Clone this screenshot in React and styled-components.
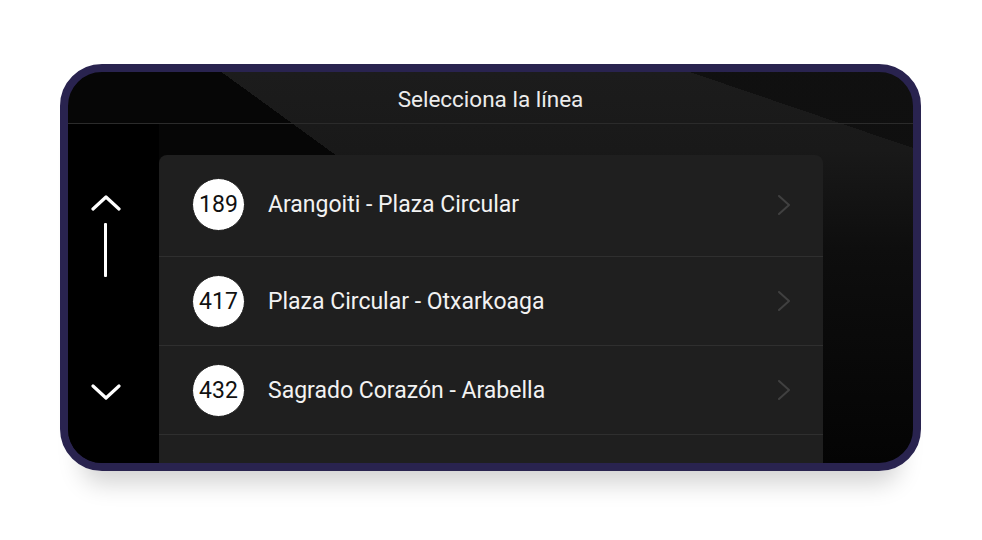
import React from "react";
import styled, { createGlobalStyle } from "styled-components";

const lines = [
  { id: "189", name: "Arangoiti - Plaza Circular" },
  { id: "417", name: "Plaza Circular - Otxarkoaga" },
  { id: "432", name: "Sagrado Corazón - Arabella" },
];

const ChevronUp = () => (
  <svg width="30" height="16" viewBox="0 0 30 16" fill="none">
    <path d="M2 14 L15 2 L28 14" stroke="#fff" strokeWidth="3.2" strokeLinecap="round" strokeLinejoin="round" />
  </svg>
);

const ChevronDown = () => (
  <svg width="30" height="18" viewBox="0 0 30 18" fill="none">
    <path d="M2 3 L15 15 L28 3" stroke="#fff" strokeWidth="3.2" strokeLinecap="round" strokeLinejoin="round" />
  </svg>
);

const ChevronRight = () => (
  <svg width="14" height="20" viewBox="0 0 14 20" fill="none">
    <path d="M2 1 L12 10 L2 19" stroke="#404040" strokeWidth="2" strokeLinecap="round" strokeLinejoin="round" />
  </svg>
);

const App = () => {
  return (
    <>
      <GlobalStyle />
      <Stage>
        <Frame>
          <Header>Selecciona la línea</Header>
          <Body>
            <Sidebar>
              <ChevronUp />
              <ScrollBar />
              <DownButton>
                <ChevronDown />
              </DownButton>
            </Sidebar>
            <Panel>
              {lines.map((line, i) => (
                <Row key={line.id} $first={i === 0}>
                  <Badge>{line.id}</Badge>
                  <RowName>{line.name}</RowName>
                  <ChevronRight />
                </Row>
              ))}
            </Panel>
            <div />
          </Body>
        </Frame>
      </Stage>
    </>
  );
};

export default App;

const GlobalStyle = createGlobalStyle`
  body {
    margin: 0;
    background: #ffffff;
    font-family: Roboto, "Liberation Sans", sans-serif;
  }
`;

const Stage = styled.div`
  width: 982px;
  height: 540px;
  box-sizing: border-box;
  padding: 64px 61px 0 60px;
`;

const Frame = styled.div`
  height: 407px;
  box-sizing: border-box;
  border: 8px solid #29234f;
  border-radius: 42px;
  overflow: hidden;
  display: flex;
  flex-direction: column;
  box-shadow: 0 34px 24px -22px rgba(0, 0, 0, 0.18);
  background:
    linear-gradient(18.8deg, transparent 88.8%, rgba(14, 14, 14, 0.85) 88.8%),
    linear-gradient(36deg, #060606 50%, transparent 50%),
    linear-gradient(to bottom, #1c1c1c 0%, #191919 20%, #0e0e0e 45%, #040404 100%);
`;

const Header = styled.div`
  height: 52px;
  flex-shrink: 0;
  border-bottom: 1px solid #2b2b2b;
  display: flex;
  align-items: center;
  justify-content: center;
  color: #ececec;
  font-size: 22.5px;
  padding-top: 2px;
  box-sizing: border-box;
`;

const Body = styled.div`
  flex: 1;
  display: grid;
  grid-template-columns: 91px 1fr 90px;
  min-height: 0;
`;

const Sidebar = styled.div`
  background: #000;
  display: flex;
  flex-direction: column;
  align-items: center;
  padding: 71px 16px 62px 0;
`;

const ScrollBar = styled.div`
  width: 3px;
  height: 54px;
  margin-top: 12px;
  background: #fff;
  border-radius: 1px;
`;

const DownButton = styled.div`
  margin-top: auto;
  display: flex;
`;

const Panel = styled.div`
  margin-top: 31px;
  background: #1f1f1f;
  border-radius: 8px 8px 0 0;
  display: flex;
  flex-direction: column;
  overflow: hidden;
`;

const Row = styled.div`
  height: ${(p) => (p.$first ? "102px" : "89px")};
  flex-shrink: 0;
  box-sizing: border-box;
  padding: ${(p) => (p.$first ? "0 32px 2px 33px" : "0 32px 0 33px")};
  display: flex;
  align-items: center;
  border-bottom: 1px solid #2f2f2f;
`;

const Badge = styled.div`
  width: 53px;
  height: 53px;
  border-radius: 50%;
  background: #fff;
  border: 1.5px solid #1a1a1a;
  box-sizing: border-box;
  display: flex;
  align-items: center;
  justify-content: center;
  color: #111;
  font-size: 23px;
  font-weight: 400;
  flex-shrink: 0;
`;

const RowName = styled.div`
  flex: 1;
  margin-left: 23px;
  color: #f2f2f2;
  font-size: 23px;
`;
